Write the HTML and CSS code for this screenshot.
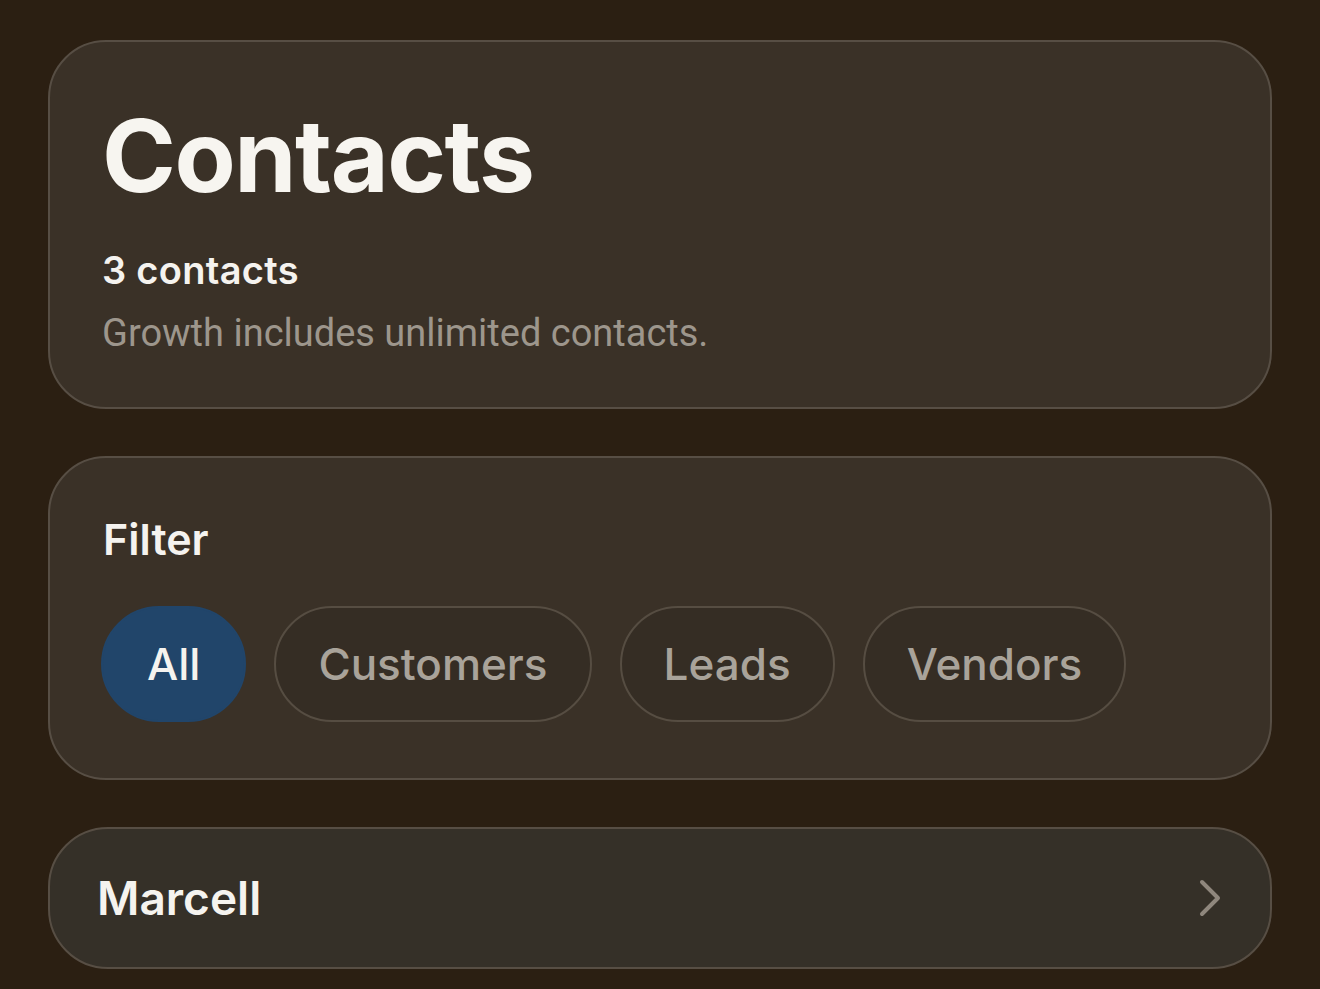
FILE: index.html
```html
<!DOCTYPE html>
<html lang="en">
<head>
<meta charset="utf-8">
<title>Contacts</title>
<link rel="stylesheet" href="styles.css">
</head>
<body>
<main class="page">
  <section class="card header-card">
    <h1 class="title">Contacts</h1>
    <p class="count">3 contacts</p>
    <p class="note">Growth includes unlimited contacts.</p>
  </section>
  <section class="card filter-card">
    <h2 class="filter-title">Filter</h2>
    <div class="chips">
      <button class="chip chip-active">All</button>
      <button class="chip">Customers</button>
      <button class="chip">Leads</button>
      <button class="chip">Vendors</button>
    </div>
  </section>
  <a class="card row" href="#">
    <span class="row-name">Marcell</span>
    <svg class="chevron" width="26" height="40" viewBox="0 0 26 40" aria-hidden="true">
      <path d="M4 4 L20 20 L4 36" fill="none" stroke="#8f877d" stroke-width="4" stroke-linecap="round" stroke-linejoin="round"/>
    </svg>
  </a>
</main>
</body>
</html>
```
FILE: styles.css
```css
* { box-sizing: border-box; }
html, body { margin: 0; padding: 0; }
body {
  background: #2b1f12;
  font-family: Inter, "Noto Sans", sans-serif;
  color: #f5f3ef;
  height: 989px;
  overflow: hidden;
}
.page {
  padding: 40px 48px 0 48px;
  display: flex;
  flex-direction: column;
  gap: 47px;
}
.card {
  background: #3a3127;
  border: 2px solid #574e44;
  border-radius: 58px;
}
.header-card {
  height: 369px;
  padding: 64px 0 0 52px;
}
.title {
  margin: 0;
  font-size: 100px;
  font-weight: 700;
  line-height: 1;
  letter-spacing: -1.5px;
  color: #f7f5f0;
}
.count {
  margin: 45px 0 0 0;
  font-size: 38px;
  font-weight: 600;
  line-height: 1;
  letter-spacing: 0.3px;
  color: #f5f3ef;
}
.note {
  margin: 25px 0 0 0;
  font-family: Roboto, "Noto Sans", sans-serif;
  font-size: 38px;
  font-weight: 400;
  line-height: 1;
  color: #9d968c;
}
.filter-card {
  height: 324px;
  padding: 60px 0 0 53px;
}
.filter-title {
  margin: 0;
  font-size: 43px;
  font-weight: 600;
  line-height: 1;
  color: #f5f3ef;
}
.chips {
  display: flex;
  gap: 28px;
  margin-top: 45px;
  margin-left: -2px;
}
.chip {
  height: 116px;
  padding: 0 42px;
  border-radius: 58px;
  border: 2px solid #564d42;
  background: #352d24;
  font-family: Inter, "Noto Sans", sans-serif;
  font-size: 44px;
  font-weight: 500;
  color: #a9a39a;
  cursor: pointer;
}
.chip-active {
  background: #21456a;
  border-color: #21456a;
  color: #f5f3ef;
  padding: 0 44px;
}
.row {
  height: 142px;
  display: flex;
  align-items: center;
  justify-content: space-between;
  padding: 0 46px 0 47px;
  text-decoration: none;
  background: #353028;
  border-radius: 60px;
}
.row-name {
  font-size: 46px;
  font-weight: 600;
  color: #f5f3ef;
}
.chevron { display: block; }
```
